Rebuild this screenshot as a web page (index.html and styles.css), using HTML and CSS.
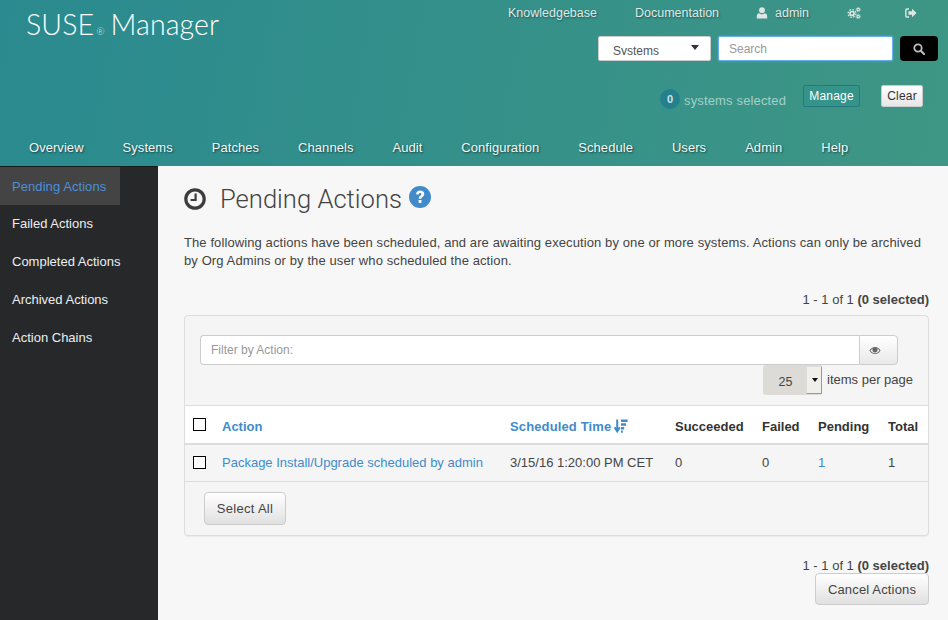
FILE: index.html
```html
<!DOCTYPE html>
<html lang="en">
<head>
    <meta charset="UTF-8">
    <title>Pending Actions - SUSE Manager</title>
    <link rel="stylesheet" href="styles.css">
</head>
<body>
    <header class="top">
        <div class="top-main">
            <div class="logo">SUSE<span class="reg">®</span> Manager</div>
            <div class="tools">
                <ul class="utility">
                    <li class="u-kb">Knowledgebase</li>
                    <li class="u-doc">Documentation</li>
                    <li class="u-user">
                        <svg class="icon-user" viewBox="0 0 12 12"><circle cx="6" cy="3.2" r="2.9"/><path d="M0.8 11.4V9.2C0.8 7.4 2 6.2 3.4 6.2C4.2 6.9 5 7.2 6 7.2S7.8 6.9 8.6 6.2C10 6.2 11.2 7.4 11.2 9.2V11.4Z"/></svg>
                        admin
                    </li>
                    <li class="u-cog">
                        <svg class="icon-cogs" viewBox="0 0 14 12"><circle cx="5" cy="6.5" r="2" fill="none" stroke-width="1.7"/><circle cx="5" cy="6.5" r="3.9" fill="none" stroke-width="1.3" stroke-dasharray="1.6 1.45"/><circle cx="11.2" cy="2.6" r="1.2" fill="none" stroke-width="1.1"/><circle cx="11.2" cy="2.6" r="2.2" fill="none" stroke-width=".8" stroke-dasharray="1 .75"/><circle cx="11.2" cy="9.4" r="1.2" fill="none" stroke-width="1.1"/><circle cx="11.2" cy="9.4" r="2.2" fill="none" stroke-width=".8" stroke-dasharray="1 .75"/></svg>
                    </li>
                    <li class="u-out">
                        <svg class="icon-out" viewBox="0 0 12 10"><path d="M4 1H2C1.2 1 .8 1.4 .8 2.2V7.8C.8 8.6 1.2 9 2 9H4" fill="none" stroke-width="1.4"/><path d="M7 .8L11.6 5L7 9.2V6.7H3.4V3.3H7Z" stroke="none"/></svg>
                    </li>
                </ul>
                <div class="search-row">
                    <div class="search-type"><span class="search-type-text">Systems</span><span class="caret"></span></div>
                    <input class="search-input" type="text" placeholder="Search">
                    <button class="search-btn" type="button">
                        <svg class="icon-search" viewBox="0 0 12 12"><circle cx="5" cy="5" r="3.7" fill="none" stroke-width="1.8"/><path d="M7.8 7.8L11 11" fill="none" stroke-width="2.2" stroke-linecap="round"/></svg>
                    </button>
                </div>
                <div class="ssm-row">
                    <span class="badge">0</span>
                    <span class="ssm-text">systems selected</span>
                    <button class="btn-manage" type="button">Manage</button>
                    <button class="btn-clear" type="button">Clear</button>
                </div>
            </div>
        </div>
        <nav class="main-nav">
            <a>Overview</a>
            <a>Systems</a>
            <a>Patches</a>
            <a>Channels</a>
            <a>Audit</a>
            <a>Configuration</a>
            <a>Schedule</a>
            <a>Users</a>
            <a>Admin</a>
            <a>Help</a>
        </nav>
    </header>

    <div class="page">
        <aside class="sidebar">
            <a class="active">Pending Actions</a>
            <a>Failed Actions</a>
            <a>Completed Actions</a>
            <a>Archived Actions</a>
            <a>Action Chains</a>
        </aside>

        <main class="content">
            <div class="title-row">
                <svg class="icon-clock" viewBox="0 0 22 22"><circle cx="11" cy="11" r="9.2" fill="none" stroke-width="3.2"/><path d="M11.6 5.4V12H6.6" fill="none" stroke-width="2.2"/></svg>
                <h1>Pending Actions</h1>
                <svg class="icon-help" viewBox="0 0 22 22"><circle cx="11" cy="11" r="11" fill="#428bca"/><path d="M7 8.2C7.3 5.9 8.9 4.6 11.2 4.6C13.6 4.6 15.3 6 15.3 8C15.3 10.6 12.4 10.9 12.4 12.7H9.7C9.7 9.9 12.4 9.6 12.4 8.1C12.4 7.4 11.9 7 11.1 7C10.3 7 9.8 7.5 9.6 8.6Z" fill="#fff"/><rect x="9.6" y="14" width="2.9" height="2.9" fill="#fff"/></svg>
            </div>
            <p class="intro">The following actions have been scheduled, and are awaiting execution by one or more systems. Actions can only be archived by Org Admins or by the user who scheduled the action.</p>
            <div class="count count-top">1 - 1 of 1 <strong>(0 selected)</strong></div>

            <section class="panel">
                <div class="panel-tools">
                    <div class="filter">
                        <input class="filter-input" type="text" placeholder="Filter by Action:">
                        <button class="filter-btn" type="button">
                            <svg class="icon-eye" viewBox="0 0 14 10"><path d="M.5 5C2 2.2 4.3 .8 7 .8S12 2.2 13.5 5C12 7.8 9.7 9.2 7 9.2S2 7.8 .5 5ZM1.8 5C3 7 4.8 8.2 7 8.2S11 7 12.2 5C11.4 3.7 10.4 2.8 9.3 2.3C9.8 2.9 10 3.6 10 4.3C10 6 8.7 7.3 7 7.3S4 6 4 4.3C4 3.6 4.2 2.9 4.7 2.3C3.6 2.8 2.6 3.7 1.8 5Z" fill-rule="evenodd"/></svg>
                        </button>
                    </div>
                    <div class="per-page">
                        <div class="per-select">
                            <span class="per-value">25</span>
                            <span class="per-arrow"><span class="caret caret-small"></span></span>
                        </div>
                        <span class="per-label">items per page</span>
                    </div>
                </div>

                <table class="actions">
                    <colgroup>
                        <col class="c-check"><col class="c-action"><col class="c-time"><col class="c-ok"><col class="c-fail"><col class="c-pend"><col class="c-total">
                    </colgroup>
                    <thead>
                        <tr>
                            <th><span class="check"></span></th>
                            <th class="link">Action</th>
                            <th class="link th-time">Scheduled Time
                                <svg class="icon-sort" viewBox="0 0 14 14"><path d="M3.2 0.5V10.5M0.6 8.4L3.2 12.4L5.8 8.4" fill="none" stroke-width="2"/><path d="M7 .6H13.6V3H7ZM7 4.3H12V6.7H7ZM7 8H10.2V10.4H7ZM7 11.5H8.8V13.7H7Z" stroke="none"/></svg>
                            </th>
                            <th>Succeeded</th>
                            <th>Failed</th>
                            <th>Pending</th>
                            <th>Total</th>
                        </tr>
                    </thead>
                    <tbody>
                        <tr>
                            <td><span class="check"></span></td>
                            <td class="link">Package Install/Upgrade scheduled by admin</td>
                            <td>3/15/16 1:20:00 PM CET</td>
                            <td>0</td>
                            <td>0</td>
                            <td class="link">1</td>
                            <td>1</td>
                        </tr>
                    </tbody>
                </table>

                <div class="panel-foot">
                    <button class="btn btn-select" type="button">Select All</button>
                </div>
            </section>

            <div class="count count-bottom">1 - 1 of 1 <strong>(0 selected)</strong></div>
            <div class="bottom-actions">
                <button class="btn btn-cancel" type="button">Cancel Actions</button>
            </div>
        </main>
    </div>
</body>
</html>
```

FILE: styles.css
```css
* {
    box-sizing: border-box;
}
html, body {
    height: 100%;
}
body {
    margin: 0;
    height: 620px;
    overflow: hidden;
    font-family: "Liberation Sans", Arial, sans-serif;
    font-size: 13px;
    line-height: 18px;
    color: #444;
    background: #f7f7f7;
}
button {
    font-family: inherit;
    cursor: pointer;
}

/* header */
.top {
    height: 166px;
    background: linear-gradient(100deg, #2a8a8f 0%, #3e9684 100%);
    color: #fff;
    display: flex;
    flex-direction: column;
}
.top-main {
    display: flex;
    justify-content: space-between;
    height: 129px;
}
.logo {
    font-family: Lato, sans-serif;
    font-weight: 300;
    font-size: 28.5px;
    line-height: 32px;
    padding: 8px 0 0 26px;
    word-spacing: -2px;
    letter-spacing: 0.1px;
}
.reg {
    font-size: 10px;
    margin-left: 2px;
    opacity: 0.8;
}
.tools {
    display: flex;
    flex-direction: column;
    width: 460px;
}
.utility {
    list-style: none;
    margin: 0;
    padding: 4px 0 0;
    height: 36px;
    display: flex;
    font-size: 12.5px;
    color: #dfe9e6;
    text-shadow: 1px 1px 2px rgba(0,0,0,0.4);
}
.utility svg {
    fill: #dfe6e4;
    stroke: #dfe6e4;
}
.u-kb { margin-left: 20px; width: 127px; }
.u-doc { width: 121px; }
.u-user { width: 91px; display: flex; align-items: center; gap: 7px; height: 18px; }
.u-cog { width: 58px; }
.icon-user { width: 12px; height: 12px; stroke: none !important; }
.icon-cogs { width: 14px; height: 12px; margin-top: 3px; display: block; }
.icon-out { width: 12px; height: 10px; margin-top: 4px; display: block; }

.search-row {
    display: flex;
    height: 25px;
    padding-left: 110px;
}
.search-type {
    width: 113px;
    height: 25px;
    background: #fff;
    border: 1px solid #ccc;
    border-radius: 2px;
    color: #555;
    font-size: 12px;
    position: relative;
    padding-left: 14px;
}
.search-type-text {
    display: block;
    height: 14px;
    line-height: 20px;
    margin-top: 4px;
    overflow: hidden;
}
.caret {
    position: absolute;
    right: 11px;
    top: 8px;
    border-top: 5px solid #333;
    border-left: 4px solid transparent;
    border-right: 4px solid transparent;
}
.search-input {
    width: 175px;
    height: 25px;
    margin-left: 7px;
    border: 1px solid #66afe9;
    border-radius: 2px;
    padding: 0 10px;
    font: 12px "Liberation Sans", sans-serif;
    box-shadow: 0 0 3px rgba(102,175,233,0.6);
}
.search-input::placeholder {
    color: #999;
}
.search-btn {
    width: 38px;
    height: 25px;
    margin-left: 7px;
    background: #000;
    border: none;
    border-radius: 4px;
    padding: 0;
    display: flex;
    align-items: center;
    justify-content: center;
}
.icon-search {
    width: 12px;
    height: 12px;
    stroke: #bbb;
}
.ssm-row {
    display: flex;
    align-items: flex-start;
    padding: 24px 0 0 172px;
    font-size: 13px;
}
.badge {
    width: 20px;
    height: 20px;
    margin-top: 4px;
    border-radius: 50%;
    background: #25808e;
    color: #cfe6e6;
    font-size: 11px;
    font-weight: bold;
    line-height: 20px;
    text-align: center;
}
.ssm-text {
    margin: 7px 0 0 4px;
    width: 119px;
    color: #a3d0c9;
    letter-spacing: 0.15px;
}
.btn-manage, .btn-clear {
    height: 22px;
    font-size: 12px;
    padding: 0;
    border-radius: 2px;
    letter-spacing: 0.2px;
}
.btn-manage {
    width: 57px;
    background: #35938a;
    border: 1px solid #247a7c;
    color: #fff;
}
.btn-clear {
    width: 42px;
    margin-left: 21px;
    background: linear-gradient(#fff, #e6e6e6);
    border: 1px solid #ccc;
    color: #333;
}
.main-nav {
    display: flex;
    padding: 10px 0 0 29px;
    text-shadow: 1px 1px 2px rgba(0,0,0,0.55);
    color: #f2f6f5;
    letter-spacing: 0.05px;
}
.main-nav a {
    margin-right: 39px;
}

/* page body */
.page {
    display: flex;
    height: 454px;
}
.sidebar {
    width: 158px;
    flex: none;
    background: #26282a;
    border-top: 1px solid #17191a;
    color: #eee;
}
.sidebar a {
    display: block;
    height: 38px;
    padding: 10px 0 0 12px;
    width: 120px;
    white-space: nowrap;
}
.sidebar a.active {
    background: #444;
    color: #4a90d9;
    padding-top: 11px;
    letter-spacing: 0.07px;
}
.content {
    flex: 1;
    padding: 0 19px 0 26px;
    min-width: 0;
}
.title-row {
    display: flex;
    align-items: flex-start;
    height: 62px;
    padding-top: 17px;
}
.icon-clock {
    width: 22px;
    height: 22px;
    margin-top: 5px;
    stroke: #3c3c3c;
}
h1 {
    font-family: Roboto, sans-serif;
    font-weight: 300;
    font-size: 25.6px;
    line-height: 32px;
    margin: 0 7px 0 14px;
    color: #444;
}
.icon-help {
    width: 22px;
    height: 22px;
    margin-top: 3px;
}
.intro {
    margin: 6px 0 0;
    height: 40px;
    letter-spacing: 0.1px;
}
.count {
    text-align: right;
}
.count-top {
    margin-top: 17px;
    height: 24px;
}
.panel {
    height: 221px;
    background: #f5f5f5;
    border: 1px solid #ddd;
    border-radius: 4px;
    box-shadow: 0 1px 1px rgba(0,0,0,0.05);
    display: flex;
    flex-direction: column;
}
.panel-tools {
    height: 89px;
    padding: 19px 15px 0;
}
.filter {
    display: flex;
    height: 30px;
    margin-right: 15px;
}
.filter-input {
    flex: 1;
    border: 1px solid #ccc;
    border-right: none;
    border-radius: 4px 0 0 4px;
    padding: 0 10px;
    font: 12px "Liberation Sans", sans-serif;
}
.filter-input::placeholder {
    color: #999;
}
.filter-btn {
    width: 39px;
    background: linear-gradient(#fff, #e9e9e9);
    border: 1px solid #ccc;
    border-radius: 0 4px 4px 0;
    padding: 0 8px 0 0;
}
.icon-eye {
    width: 12px;
    height: 9px;
    fill: #666;
}
.per-page {
    display: flex;
    justify-content: flex-end;
    align-items: center;
    height: 30px;
}
.per-select {
    width: 59px;
    height: 30px;
    background: #dcdbd6;
    border-radius: 3px;
    display: flex;
}
.per-value {
    flex: 1;
    text-align: center;
    line-height: 34px;
    font-size: 12.5px;
    padding-left: 2px;
}
.per-arrow {
    width: 16px;
    height: 28px;
    margin-top: 1px;
    background: #f0efea;
    border: 1px solid #999;
    border-left-color: #ddd;
    border-top-color: #ddd;
    position: relative;
}
.caret-small {
    right: 3px;
    top: 11px;
    border-top: 4px solid #111;
    border-left-width: 3px;
    border-right-width: 3px;
}
.per-label {
    margin-left: 5px;
}
.actions {
    width: 743px;
    table-layout: fixed;
    border-collapse: collapse;
    background: #fff;
}
.c-check { width: 29px; }
.c-action { width: 288px; }
.c-time { width: 165px; }
.c-ok { width: 87px; }
.c-fail { width: 56px; }
.c-pend { width: 70px; }
.actions th, .actions td {
    padding: 0 0 0 8px;
    text-align: left;
    white-space: nowrap;
}
.actions th {
    height: 38px;
    padding-top: 6px;
    border-top: 1px solid #ddd;
    border-bottom: 2px solid #ddd;
    color: #333;
    font-weight: bold;
}
.actions td {
    height: 38px;
    background: #f5f5f5;
    border-bottom: 1px solid #ddd;
}
.actions .link {
    color: #428bca;
}
.actions .th-time {
    letter-spacing: 0.13px;
}
.check {
    display: block;
    width: 13px;
    height: 13px;
    border: 1px solid #000;
    background: #fff;
}
.actions th .check {
    margin-top: -6px;
}
.icon-sort {
    width: 14px;
    height: 14px;
    margin-left: -1px;
    vertical-align: -2px;
    stroke: #428bca;
    fill: #428bca;
}
.panel-foot {
    padding: 10px 0 0 19px;
}
.btn {
    height: 33px;
    padding: 0 12px;
    background: linear-gradient(#fff, #e0e0e0);
    border: 1px solid #ccc;
    border-radius: 4px;
    font-size: 13px;
    color: #444;
}
.btn-select {
    width: 82px;
    padding: 0;
    letter-spacing: 0.3px;
}
.count-bottom {
    margin-top: 21px;
    height: 16px;
}
.bottom-actions {
    display: flex;
    justify-content: flex-end;
}
.btn-cancel {
    width: 114px;
    height: 32px;
    padding: 0;
    letter-spacing: 0.15px;
}
```
